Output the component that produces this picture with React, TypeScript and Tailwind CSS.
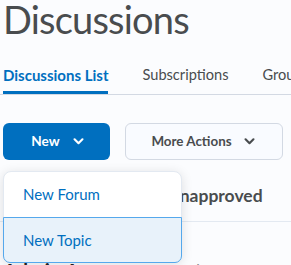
import React from "react";

function Chevron({ className }: { className?: string }) {
  return (
    <svg viewBox="0 0 12 8" width="11" height="7" className={className} fill="none" stroke="currentColor" strokeWidth="2.4" strokeLinecap="round" strokeLinejoin="round">
      <path d="M1.5 1.5 L6 6 L10.5 1.5" />
    </svg>
  );
}

export default function App() {
  return (
    <div
      className="relative w-[291px] h-[265px] overflow-hidden bg-[#fbfcfe] text-[#494c4e]"
      style={{ fontFamily: "Lato, 'Open Sans', sans-serif" }}
    >
      <div className="pl-[3px]">
        <h1 className="text-[38px] leading-[38px] tracking-[-0.8px] font-normal text-[#494c4e] whitespace-nowrap">Discussions</h1>

        <div className="mt-[28px] flex items-end gap-[34px] whitespace-nowrap border-b border-[#d3d9e3] -ml-[3px] pl-[3px]">
          <div className="flex flex-col">
            <span className="text-[15px] leading-[18px] font-bold text-[#006fbf]">Discussions List</span>
            <div className="mt-[7px] h-[3px] bg-[#006fbf]" />
          </div>
          <div className="flex flex-col">
            <span className="text-[14.6px] leading-[18px]">Subscriptions</span>
            <div className="mt-[7px] h-[3px]" />
          </div>
          <div className="flex flex-col">
            <span className="text-[14.6px] leading-[18px]">Groups</span>
            <div className="mt-[7px] h-[3px]" />
          </div>
        </div>

        <div className="mt-[28px] flex gap-[15px]">
          <button className="w-[107px] h-[37px] rounded-[6px] bg-[#006fbf] text-white flex items-center justify-center gap-[13px] pl-[2px]">
            <span className="text-[13.6px] font-bold">New</span>
            <Chevron />
          </button>
          <button className="w-[158px] h-[37px] rounded-[6px] bg-[#f9fbff] border border-[#d3d9e3] text-[#494c4e] flex items-center justify-center gap-[12px] pr-[2px]">
            <span className="text-[13.4px] font-bold">More Actions</span>
            <Chevron />
          </button>
        </div>

        <div className="mt-[24px] pl-[167px] border-b border-[#e3e9f1] h-[38px] -ml-[3px]">
          <span className="text-[17.5px] leading-[20px] font-bold whitespace-nowrap">Unapproved</span>
        </div>

        <div className="mt-[37px] text-[20px] font-bold leading-[24px] whitespace-nowrap text-[#202122]">
          Admin Announcements
        </div>
      </div>

      <div className="absolute left-[3px] top-[171px] w-[179px] h-[92px] bg-white rounded-[8px] border border-[#e3e9f1] shadow-[0_2px_12px_rgba(0,0,0,0.12)] flex flex-col">
        <div className="h-[45px] flex items-center pl-[19px] text-[15px] text-[#006fbf]">New Forum</div>
        <div className="flex-1 flex items-center pl-[19px] text-[15px] text-[#006fbf] bg-[#e8f2fa] border border-[#55a8ec] rounded-b-[7px] -mx-[1px] -mb-[1px]">New Topic</div>
      </div>
    </div>
  );
}
